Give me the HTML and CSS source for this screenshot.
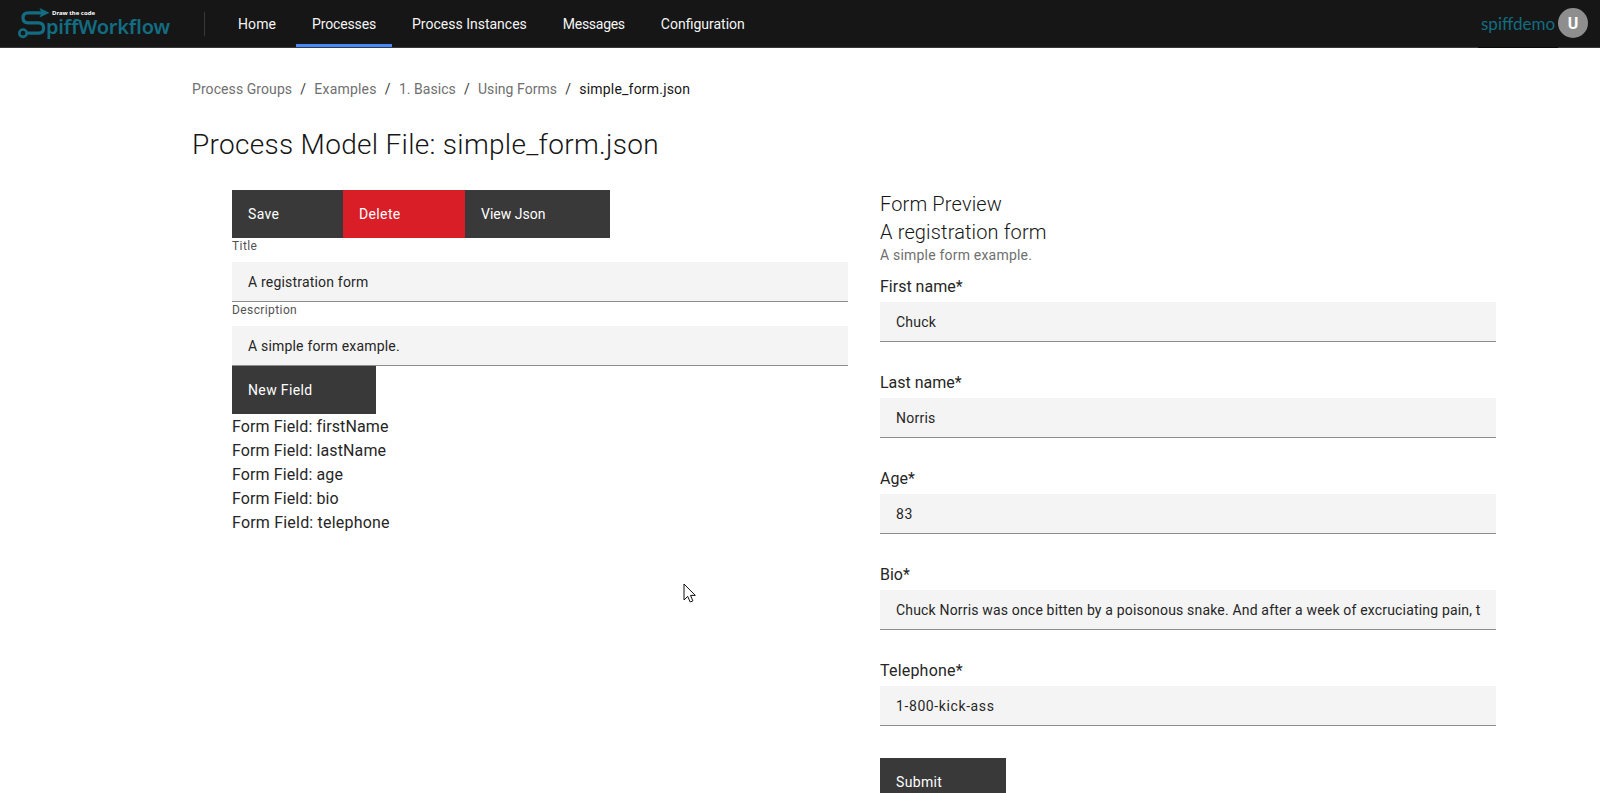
FILE: index.html
```html
<!DOCTYPE html>
<html lang="en"><head><meta charset="utf-8"><title>SpiffWorkflow</title><link rel="stylesheet" href="styles.css"></head>
<body>
<header class="header">
  <a class="logo" aria-label="SpiffWorkflow">
    <svg width="156" height="36" viewBox="0 0 156 36">
      <g fill="none" stroke="#126d82" stroke-width="3.2"><path d="M25 6.8H10Q5 6.8 5 11.8Q5 16.8 10 16.8H20.5Q25.6 16.8 25.6 22Q25.6 27.2 20.5 27.2H9"/><circle cx="5" cy="27.2" r="3.7" stroke-width="2.6"/></g>
      <path fill="#126d82" d="M21.5 2L31.5 6.8L21.5 11.6L23.5 6.8Z"/>
      <text class="tagline" x="34" y="8.8" textLength="43">Draw the code</text>
      <text class="wordmark" x="28" y="28.4" textLength="124">piffWorkflow</text>
    </svg>
  </a>
  <nav class="nav">
    <a class="nav-link home">Home</a>
    <a class="nav-link active processes">Processes</a>
    <a class="nav-link">Process Instances</a>
    <a class="nav-link messages">Messages</a>
    <a class="nav-link">Configuration</a>
  </nav>
  <div class="user"><a class="user-name">spiffdemo</a><span class="avatar">U</span></div>
</header>
<main class="main">
  <nav class="crumbs">
    <a class="first">Process Groups</a><i>/</i><a class="wide">Examples</a><i>/</i><a>1. Basics</a><i>/</i><a>Using Forms</a><i>/</i><a class="current">simple_form.json</a>
  </nav>
  <h1 class="title">Process Model File: simple_form.json</h1>
  <div class="columns">
    <section class="editor">
      <div class="buttons">
        <button class="btn save">Save</button><button class="btn danger">Delete</button><button class="btn view">View Json</button>
      </div>
      <label class="small-label">Title</label>
      <div class="input">A registration form</div>
      <label class="small-label">Description</label>
      <div class="input">A simple form example.</div>
      <button class="btn new-field">New Field</button>
      <div class="field-list">
        <div>Form Field: firstName</div>
        <div>Form Field: lastName</div>
        <div>Form Field: age</div>
        <div>Form Field: bio</div>
        <div class="telephone">Form Field: telephone</div>
      </div>
    </section>
    <section class="preview">
      <h2 class="subtitle">Form Preview</h2>
      <h2 class="subtitle">A registration form</h2>
      <p class="help">A simple form example.</p>
      <div class="field"><label>First name*</label><div class="input name">Chuck</div></div>
      <div class="field"><label>Last name*</label><div class="input name">Norris</div></div>
      <div class="field"><label>Age*</label><div class="input digits">83</div></div>
      <div class="field"><label>Bio*</label><div class="input bio">Chuck Norris was once bitten by a poisonous snake. And after a week of excruciating pain, t</div></div>
      <div class="field"><label class="telephone">Telephone*</label><div class="input digits">1-800-kick-ass</div></div>
      <button class="btn submit">Submit</button>
    </section>
  </div>
</main>
<svg class="cursor" width="14" height="21" viewBox="0 0 14 21"><path d="M1 1V17L4.7 13.4L7.2 19L9.9 17.9L7.5 12.4H12.3Z" fill="#fff" stroke="#111" stroke-width="1"/></svg>
</body></html>
```
FILE: styles.css
```css
* { box-sizing: border-box; }
body { margin: 0; height: 793px; overflow: hidden; background: #fff; color: #161616; font-family: Roboto, "Noto Sans", sans-serif; font-size: 16px; line-height: 24px; }
h1, h2, p { margin: 0; }
.header { display: flex; height: 48px; background: #161616; border-bottom: 1px solid #393939; }
.logo { width: 204px; height: 47px; padding: 6px 0 0 18px; }
.logo svg { display: block; overflow: visible; }
.tagline { fill: #fff; font: 700 6px "Noto Sans", sans-serif; }
.wordmark { fill: #126d82; font: 600 20px "Noto Sans", sans-serif; }
.nav { display: flex; gap: 4px; }
.nav::before { content: ""; width: 1px; height: 24px; margin: 12px 13px 0 0; background: #393939; }
.nav-link { height: 47px; padding: 0 16px; color: #f4f4f4; font-size: 14px; line-height: 48px; }
.nav-link.active { border-bottom: 3px solid #4589ff; }
.home { letter-spacing: 0.08px; }
.processes { letter-spacing: -0.14px; }
.messages { letter-spacing: -0.28px; }
.user { display: flex; margin-left: auto; padding-right: 12px; }
.user-name { width: 80px; height: 48px; padding-left: 3px; border-bottom: 1px solid #0b0b0b; color: #126d82; font-family: Lato, sans-serif; font-size: 17px; letter-spacing: 0; line-height: 47px; }
.avatar { width: 30px; height: 30px; margin-top: 8px; border-radius: 50%; background: #8e8e8e; color: #fff; font-weight: 700; line-height: 31px; text-align: center; }
.main { padding: 32px 104px 0 192px; }
.crumbs { display: flex; height: 18px; color: #6f6f6f; font-size: 14px; letter-spacing: 0.04px; line-height: 18px; }
.crumbs i { margin: 0 8.2px; color: #393939; font-style: normal; }
.crumbs .first { letter-spacing: 0.08px; }
.crumbs .wide { letter-spacing: 0.2px; }
.crumbs .current { color: #161616; letter-spacing: 0.2px; }
.title { margin-top: 29px; font-size: 28px; font-weight: 350; letter-spacing: 0.3px; line-height: 36px; }
.columns { display: grid; grid-template-columns: 616px 616px; gap: 32px; margin: 27px 0 0 40px; }
.buttons { display: flex; }
.btn { display: block; height: 48px; padding: 0 0 0 16px; border: 0; background: #393939; color: #fff; font: 400 14px/48px Roboto, sans-serif; letter-spacing: 0.36px; text-align: left; }
.save { width: 111px; }
.danger { width: 122px; background: #da1e28; }
.view { width: 145px; letter-spacing: 0; }
.new-field { width: 144px; }
.submit { width: 126px; margin-top: 1px; }
.small-label { display: block; height: 24px; color: #525252; font-size: 12px; letter-spacing: 0.4px; line-height: 16px; }
.input { height: 40px; padding: 0 16px; overflow: hidden; background: #f4f4f4; border-bottom: 1px solid #8d8d8d; color: #262626; font-size: 14px; letter-spacing: 0.19px; line-height: 40px; white-space: nowrap; }
.name { letter-spacing: 0.25px; }
.digits { letter-spacing: 0.6px; }
.bio { letter-spacing: 0.175px; }
.field-list { padding-top: 1px; color: #262626; letter-spacing: 0.11px; }
.telephone { letter-spacing: 0.2px; }
.subtitle { font-size: 20px; font-weight: 350; letter-spacing: 0.15px; line-height: 28px; }
.help { height: 31px; color: #6f6f6f; font-size: 14px; letter-spacing: 0.2px; line-height: 18px; }
.field { height: 96px; }
.field label { display: block; height: 25px; color: #262626; line-height: 20px; }
.cursor { position: absolute; left: 683px; top: 583px; }
```
